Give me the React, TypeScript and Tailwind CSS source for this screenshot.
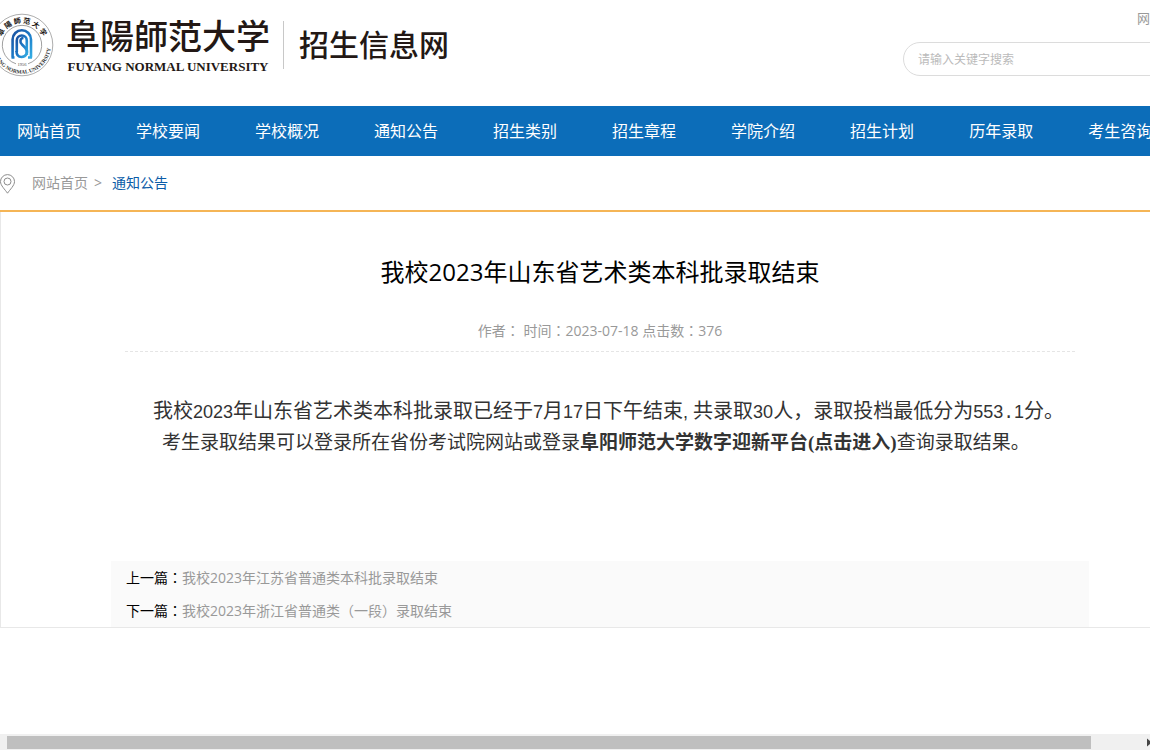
import React from 'react';

const navItems = [
  '网站首页',
  '学校要闻',
  '学校概况',
  '通知公告',
  '招生类别',
  '招生章程',
  '学院介绍',
  '招生计划',
  '历年录取',
  '考生咨询',
];

const siblings = [
  { label: '上一篇', title: '我校2023年江苏省普通类本科批录取结束' },
  { label: '下一篇', title: '我校2023年浙江省普通类（一段）录取结束' },
];

function Colon() {
  return <span className="font-['Noto_Sans_CJK_TC',sans-serif]">：</span>;
}

function Seal() {
  return (
    <svg viewBox="0 0 64 64" className="-ml-[10px] size-16 shrink-0" role="img" aria-label="阜阳师范大学校徽">
      <defs>
        <linearGradient id="emblem" x1="0" y1="0" x2="1" y2="1">
          <stop offset="0" stopColor="#1c4f9c" />
          <stop offset="0.5" stopColor="#1b78c6" />
          <stop offset="1" stopColor="#35aee4" />
        </linearGradient>
        <path id="arcTop" d="M9.5 35 A22.600 22.600 0 1 1 54.500 35" />
        <path id="arcBottom" d="M3.500 27 A28.900 28.900 0 1 0 60.500 27" />
      </defs>
      <circle cx="32" cy="32" r="30.800" fill="#fff" stroke="#8a8a8a" strokeWidth="0.700" />
      <path d="M26 50.800 A19.700 19.700 0 1 1 38 50.800" fill="none" stroke="#777" strokeWidth="0.700" />
      <text fontSize="7.200" fontWeight="700" fill="#231815" textAnchor="middle" className="font-['Noto_Sans_CJK_SC',sans-serif]">
        <textPath href="#arcTop" startOffset="50%">阜 陽 師 范 大 学</textPath>
      </text>
      <text fontSize="5.400" fontWeight="700" fill="#333" textAnchor="middle" className="font-['Liberation_Serif',serif]">
        <textPath href="#arcBottom" startOffset="50%">FUYANG NORMAL UNIVERSITY</textPath>
      </text>
      <g fill="none" stroke="url(#emblem)" strokeWidth="2.600" strokeLinejoin="round">
        <path d="M21.500 44.500 H24.500 M22.600 44.500 V26.500 a9 9 0 0 1 18.400 0 V44.500 M38 44.500 H42" />
        <path d="M26.800 39 V27.500 a5 5 0 0 1 10 0 V42" />
        <path d="M33.500 25 c-3.500 0 -4 4.500 -1.500 6.500 l3 3 c4 4 1.500 9.500 -3.500 9.500 c-3.500 0 -5 -2.500 -5 -6" />
      </g>
      <text x="32" y="52.500" fontSize="4.500" fill="#444" textAnchor="middle" className="font-['Liberation_Serif',serif]">
        1956
      </text>
    </svg>
  );
}

function PinIcon() {
  return (
    <svg viewBox="0 0 16 20" className="mt-[2px] h-5 w-4 shrink-0" fill="none" stroke="#8c8c8c" strokeWidth="1" aria-hidden="true">
      <path d="M7.500 19.200 C5 15.500 0.500 11.500 0.500 7.600 a7 7 0 0 1 14 0 C14.500 11.500 10 15.500 7.500 19.200 Z" />
      <circle cx="7.500" cy="7.500" r="3.500" />
    </svg>
  );
}

function Header() {
  return (
    <header className="flex h-[106px] justify-between">
      <a href="#" className="flex items-start pt-[13px] text-[#231815]">
        <Seal />
        <span className="ml-3 flex flex-col items-center">
          <span className="text-[34px] leading-[46px] font-medium">阜陽師范大学</span>
          <span className="font-['Liberation_Serif',serif] text-[13px] leading-4 font-bold">FUYANG NORMAL UNIVERSITY</span>
        </span>
        <span className="mt-2 ml-[13px] h-12 border-l border-[#c8c8c8]" />
        <span className="ml-[15px] text-[30px] leading-[64px] font-medium">招生信息网</span>
      </a>
      <div className="flex w-[297px] flex-col items-end">
        <a href="#" className="mr-[11px] text-[13px] leading-9 text-[#999]">网站首页</a>
        <form className="mt-[6px] w-full" role="search">
          <input
            type="search"
            aria-label="搜索"
            placeholder="请输入关键字搜索"
            className="h-[34px] w-full rounded-full border border-[#dcdcdc] bg-white px-[14px] text-xs outline-none placeholder:text-[#bbb]"
          />
        </form>
      </div>
    </header>
  );
}

export default function App() {
  return (
    <div className="flex min-h-screen flex-col overflow-hidden bg-white font-['Open_Sans','Noto_Sans_CJK_SC',sans-serif] text-black">
      <div className="min-w-[1200px]">
        <Header />

        <nav className="flex h-[50px] items-center gap-[55px] bg-[#0c6db9] pl-[17px]">
          {navItems.map((item) => (
            <a key={item} href="#" className="shrink-0 text-base text-white">
              {item}
            </a>
          ))}
        </nav>

        <div className="flex h-14 items-center border-b-2 border-[#f5b556] text-sm text-[#999]">
          <PinIcon />
          <a href="#" className="ml-4">网站首页</a>
          <span className="mx-[6px]">&gt;</span>
          <a href="#" className="ml-1 text-[#0c5ca8]">通知公告</a>
        </div>

        <main className="flex flex-col border-x border-b border-[#e8e8e8] px-[110px]">
          <article className="px-[14px]">
            <h1 className="mt-10 text-center text-2xl leading-10">我校2023年山东省艺术类本科批录取结束</h1>
            <p className="mt-7 border-b border-dashed border-[#e5e5e5] pb-[10px] text-center text-sm leading-[21px] text-[#999]">
              作者<Colon /> 时间<Colon />2023-07-18 点击数<Colon />376
            </p>
            <div className="mt-11 pb-[103px] font-['Liberation_Sans','Noto_Sans_CJK_SC',sans-serif] text-[#333]">
              <p className="pl-7 text-xl leading-[31px] whitespace-nowrap">
                我校<span className="text-lg">2023</span>年山东省艺术类本科批录取已经于<span className="text-lg">7</span>月
                <span className="text-lg">17</span>日下午结束<span className="text-lg">, </span>共录取
                <span className="text-lg">30</span>人，录取投档最低分为
                <span className="text-lg">
                  553<span className="font-['Liberation_Mono',monospace]">.</span>1
                </span>
                分。
              </p>
              <p className="pl-[37px] text-[19px] leading-[31px] whitespace-nowrap">
                考生录取结果可以登录所在省份考试院网站或登录
                <a href="#" className="font-['Liberation_Serif','Noto_Sans_CJK_SC',serif] font-bold">
                  阜阳师范大学数字迎新平台(点击进入)
                </a>
                查询录取结果。
              </p>
            </div>
          </article>
          <ul className="bg-[#fafafa] pl-[15px] text-sm leading-[33px]">
            {siblings.map(({ label, title }) => (
              <li key={label}>
                {label}
                <Colon />
                <a href="#" className="text-[#999]">{title}</a>
              </li>
            ))}
          </ul>
        </main>
      </div>

      <div className="mt-auto flex h-4 items-center bg-[#f0f0f0] pl-[7px]" aria-hidden="true">
        <div className="h-[13px] flex-1 bg-[#bfbfbf]" />
        <svg viewBox="0 0 59 9" className="h-[9px] w-[59px]">
          <path d="M56 0.500 L61 4.500 L56 8.500 Z" fill="#444" />
        </svg>
      </div>
    </div>
  );
}
